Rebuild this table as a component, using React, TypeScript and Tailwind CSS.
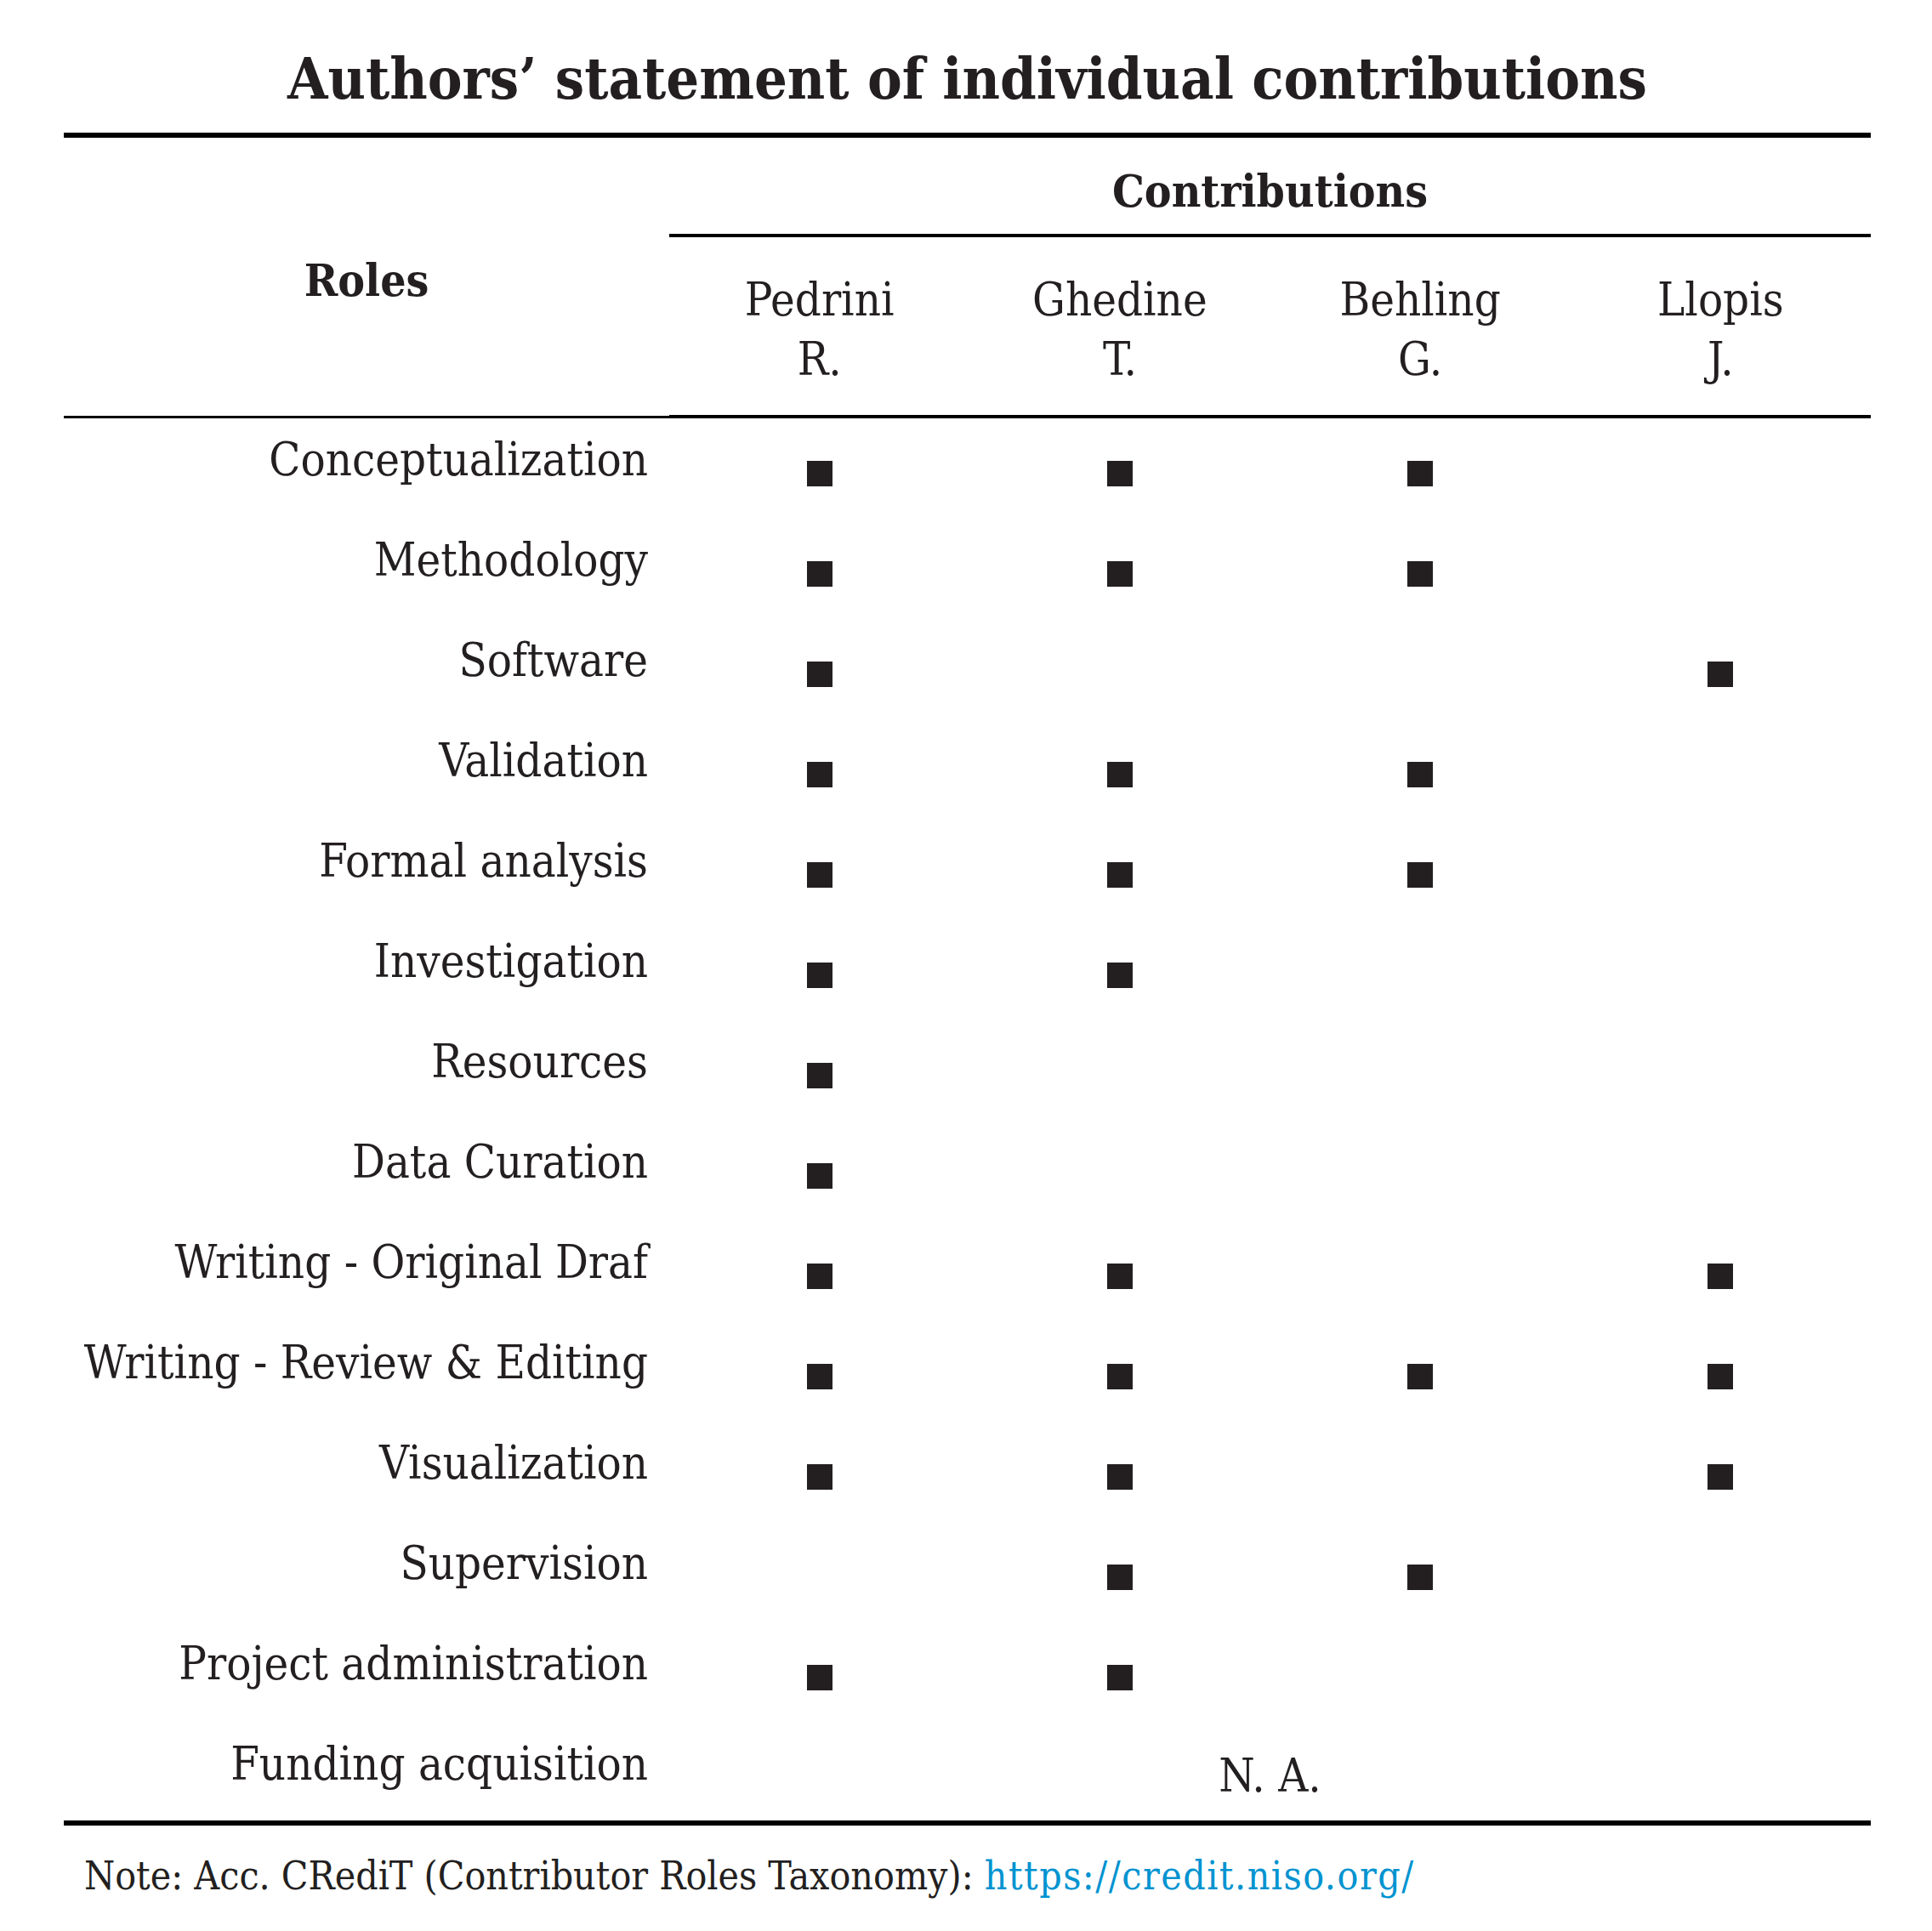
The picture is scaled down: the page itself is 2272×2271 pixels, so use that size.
import React from 'react';

type Row = { role: string; marks: boolean[] };

const authors = [
  { last: 'Pedrini', initial: 'R.' },
  { last: 'Ghedine', initial: 'T.' },
  { last: 'Behling', initial: 'G.' },
  { last: 'Llopis', initial: 'J.' },
];

const rows: Row[] = [
  { role: 'Conceptualization', marks: [true, true, true, false] },
  { role: 'Methodology', marks: [true, true, true, false] },
  { role: 'Software', marks: [true, false, false, true] },
  { role: 'Validation', marks: [true, true, true, false] },
  { role: 'Formal analysis', marks: [true, true, true, false] },
  { role: 'Investigation', marks: [true, true, false, false] },
  { role: 'Resources', marks: [true, false, false, false] },
  { role: 'Data Curation', marks: [true, false, false, false] },
  { role: 'Writing - Original Draf', marks: [true, true, false, true] },
  { role: 'Writing - Review & Editing', marks: [true, true, true, true] },
  { role: 'Visualization', marks: [true, true, false, true] },
  { role: 'Supervision', marks: [false, true, true, false] },
  { role: 'Project administration', marks: [true, true, false, false] },
];

const Mark = () => <span className="block w-[30px] h-[30px] bg-[#231f20]" />;

export default function App() {
  return (
    <div className="w-[2272px] min-h-[2271px] bg-white pl-[75px] font-['DejaVu_Serif_Condensed','DejaVu_Serif',serif] text-[#231f20]">
      <div className="w-[2125px]">
        <h1 className="pt-[58px] text-center text-[68px] leading-[68px] font-bold">
          Authors’ statement of individual contributions
        </h1>

        {/* top rule */}
        <div className="mt-[30px] h-[6px] bg-black" />

        {/* header */}
        <div className="grid grid-cols-[712px_1fr]">
          <div className="pt-[141px] text-center text-[53px] leading-[53px] font-bold">Roles</div>
          <div>
            <div className="h-[113px] pt-[36px] text-center text-[53px] leading-[53px] font-bold">Contributions</div>
            <div className="h-[4px] bg-black" />
            <div className="grid grid-cols-4 h-[209px] pt-[39px] text-center text-[54px] leading-[70px]">
              {authors.map((a) => (
                <div key={a.last}>
                  {a.last}
                  <br />
                  {a.initial}
                </div>
              ))}
            </div>
          </div>
        </div>
        <div className="flex items-center h-[4px]">
          <div className="w-[712px] h-[3px] bg-black" />
          <div className="flex-1 h-[4px] bg-black" />
        </div>

        {/* body */}
        {rows.map((r) => (
          <div key={r.role} className="grid grid-cols-[712px_repeat(4,1fr)] h-[118px]">
            <div className="pr-[25px] pt-[22px] text-right text-[54px] leading-[54px] whitespace-nowrap">{r.role}</div>
            {r.marks.map((m, i) => (
              <div key={i} className="flex justify-center pt-[50px]">
                {m && <Mark />}
              </div>
            ))}
          </div>
        ))}
        <div className="grid grid-cols-[712px_repeat(4,1fr)] h-[115px]">
          <div className="pr-[25px] pt-[22px] text-right text-[54px] leading-[54px] whitespace-nowrap">Funding acquisition</div>
          <div className="col-span-4 pt-[36px] text-center text-[54px] leading-[54px]">N. A.</div>
        </div>

        {/* bottom rule */}
        <div className="h-[6px] bg-black" />

        <p className="mt-[36px] pl-[24px] text-[46px] leading-[46px] whitespace-nowrap">
          Note: Acc. CRediT (Contributor Roles Taxonomy):{' '}
          <span className="text-[#0093d0] tracking-[1.5px]">https://credit.niso.org/</span>
        </p>
      </div>
    </div>
  );
}
